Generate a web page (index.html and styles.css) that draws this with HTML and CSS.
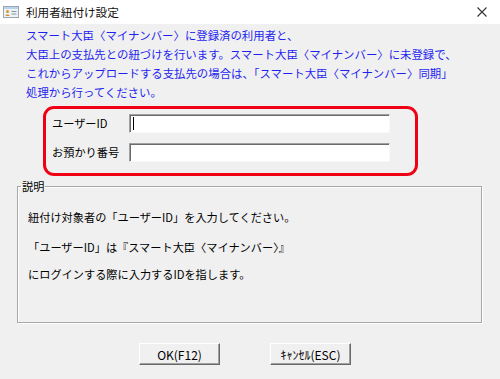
FILE: index.html
```html
<!DOCTYPE html>
<html>
<head>
    <title>利用者紐付け設定</title>
    <meta charset="UTF-8">
    <link rel="stylesheet" href="styles.css">
</head>
<body>
    <div class="window">
        <div class="title-bar">
            <svg class="app-icon" width="16" height="12" viewBox="0 0 16 12">
                <rect x="0.5" y="0.5" width="15" height="11" fill="#eef3f8" stroke="#9aa6b2"/>
                <rect x="1" y="1" width="14" height="2" fill="#b9d3ea"/>
                <circle cx="4.5" cy="5.5" r="1.5" fill="#d9962f"/>
                <path d="M2 10 Q4.5 6.5 7 10 Z" fill="#d9962f"/>
                <rect x="8.5" y="5" width="5" height="1" fill="#8a96a3"/>
                <rect x="8.5" y="7.5" width="5" height="1" fill="#8a96a3"/>
            </svg>
            <span class="title">利用者紐付け設定</span>
            <svg class="close" width="10" height="10" viewBox="0 0 10 10">
                <path d="M0.5 0.5 L9.5 9.5 M9.5 0.5 L0.5 9.5" stroke="#333" stroke-width="1.1"/>
            </svg>
        </div>

        <div class="content">
            <div class="notice">
                スマート大臣〈マイナンバー〉に登録済の利用者と、<br>
                大臣上の支払先との紐づけを行います。スマート大臣〈マイナンバー〉に未登録で、<br>
                これからアップロードする支払先の場合は、「スマート大臣〈マイナンバー〉同期」<br>
                処理から行ってください。
            </div>

            <div class="highlight">
                <div class="field-row">
                    <label class="field-label">ユーザーID</label>
                    <div class="field-input"><span class="caret"></span></div>
                </div>
                <div class="field-row">
                    <label class="field-label">お預かり番号</label>
                    <div class="field-input"></div>
                </div>
            </div>

            <fieldset class="group">
                <legend>説明</legend>
                <p class="line1">紐付け対象者の「ユーザーID」を入力してください。</p>
                <p class="line2">「ユーザーID」は『スマート大臣〈マイナンバー〉』</p>
                <p class="line3">にログインする際に入力するIDを指します。</p>
            </fieldset>

            <div class="buttons">
                <button class="btn">OK(F12)</button>
                <button class="btn">ｷｬﾝｾﾙ(ESC)</button>
            </div>
        </div>
    </div>
</body>
</html>
```

FILE: styles.css
```css
html, body {
    margin: 0;
    padding: 0;
}
body {
    font-family: "Noto Sans CJK JP", "Noto Sans", sans-serif;
    font-size: 11.2px;
    color: #000;
    background-color: #f0f0f0;
}
.window {
    width: 500px;
    height: 379px;
    background-color: #f0f0f0;
    overflow: hidden;
}
.title-bar {
    height: 24px;
    background-color: #fff;
    display: flex;
    align-items: center;
}
.app-icon {
    margin-left: 3px;
    margin-right: 7px;
}
.title {
    font-size: 11.6px;
    color: #111;
    flex: 1;
}
.close {
    margin-right: 13px;
}
.content {
    padding-top: 2px;
}
.notice {
    color: #1f1fef;
    font-size: 11.4px;
    line-height: 19px;
    padding-left: 26px;
    white-space: nowrap;
}
.highlight {
    margin: 4px 0 0 43px;
    width: 363px;
    height: 59px;
    border: 3px solid #f00014;
    border-radius: 11px;
    padding: 5px 0 0 6px;
    box-sizing: content-box;
}
.field-row {
    display: flex;
    align-items: center;
    height: 19px;
    margin-bottom: 10px;
}
.field-label {
    width: 77px;
    line-height: 19px;
}
.field-input {
    width: 259px;
    height: 17px;
    background-color: #fff;
    border: 1px solid;
    border-color: #a0a0a0 #f8f8f8 #f8f8f8 #a0a0a0;
    box-shadow: inset 1px 1px 0 #6b6b6b;
    display: flex;
    align-items: center;
}
.caret {
    width: 1px;
    height: 13px;
    margin-left: 3px;
    background-color: #000;
}
.group {
    margin: 3px 0 0 17px;
    width: 465px;
    height: 144px;
    border: 1px solid #a8a8a8;
    box-shadow: inset 1px 1px 0 #fff, 1px 1px 0 #fff;
    padding: 0 0 0 10px;
    box-sizing: border-box;
}
.group legend {
    padding: 0 1px;
    margin-left: -7px;
    line-height: 14px;
}
.group p {
    margin: 0;
    line-height: 16px;
}
.line1 {
    padding-top: 16px;
}
.line2 {
    margin-top: 14px !important;
}
.line3 {
    margin-top: 11px !important;
}
.buttons {
    display: flex;
    gap: 50px;
    padding: 20px 0 0 139px;
}
.btn {
    width: 81px;
    height: 22px;
    font-family: inherit;
    font-size: 12px;
    white-space: nowrap;
    background-color: #f0f0f0;
    border: 1px solid;
    border-color: #fff #696969 #696969 #fff;
    box-shadow: inset -1px -1px 0 #a0a0a0;
    padding: 0;
    color: #000;
}
```
